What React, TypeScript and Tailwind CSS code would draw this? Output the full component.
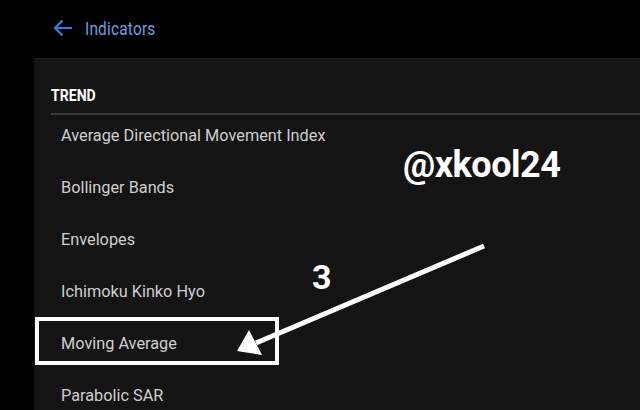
import React from "react";

const items = [
  "Average Directional Movement Index",
  "Bollinger Bands",
  "Envelopes",
  "Ichimoku Kinko Hyo",
  "Moving Average",
  "Parabolic SAR",
];

export default function App() {
  return (
    <div className="w-[640px] h-[410px] bg-black overflow-hidden flex flex-col font-['Roboto',sans-serif] relative">
      {/* Header */}
      <div className="h-[58px] shrink-0 flex items-center pl-[53px] pb-[2px]">
        <svg width="20" height="18" viewBox="0 0 20 18" className="text-[#2f7fe0]">
          <path d="M19 9H2M9.5 1.5L2 9l7.5 7.5" fill="none" stroke="currentColor" strokeWidth="2.2" />
        </svg>
        <span className="ml-[12px] text-[18px] text-[#6f9de0] inline-block origin-left scale-x-[0.86] tracking-[0.2px]">
          Indicators
        </span>
      </div>

      {/* Panel */}
      <div className="ml-[34px] flex-1 min-h-0 overflow-hidden bg-[#141414] border-t border-[#1c1c1c] pl-[17px] pt-[25px]">
        <div className="text-[16px] font-bold text-white leading-[18px] inline-block origin-left scale-x-[0.88]">
          TREND
        </div>
        <div className="h-[2px] bg-[#3a3a3a] mt-[5px]" />
        <ul className="pl-[10px] text-[16.3px] text-[#cfcfcf] -mt-[5px]">
          {items.map((item) => (
            <li key={item} className="h-[52px] shrink-0 flex items-center">
              {item}
            </li>
          ))}
        </ul>
      </div>

      {/* Annotations */}
      <div className="absolute left-[35px] top-[317px] w-[244px] h-[48px] border-[4px] border-white" />
      <div className="absolute left-[403px] top-[147px] text-[36px] font-bold text-white leading-none tracking-[-0.5px]">
        @xkool24
      </div>
      <div className="absolute left-[312px] top-[260px] text-[34px] font-bold text-white leading-none">
        3
      </div>
      <svg className="absolute left-0 top-0" width="640" height="410">
        <line x1="484" y1="246" x2="256" y2="343" stroke="white" strokeWidth="5" />
        <polygon points="237,351 249,330 262,355" fill="white" />
      </svg>
    </div>
  );
}
